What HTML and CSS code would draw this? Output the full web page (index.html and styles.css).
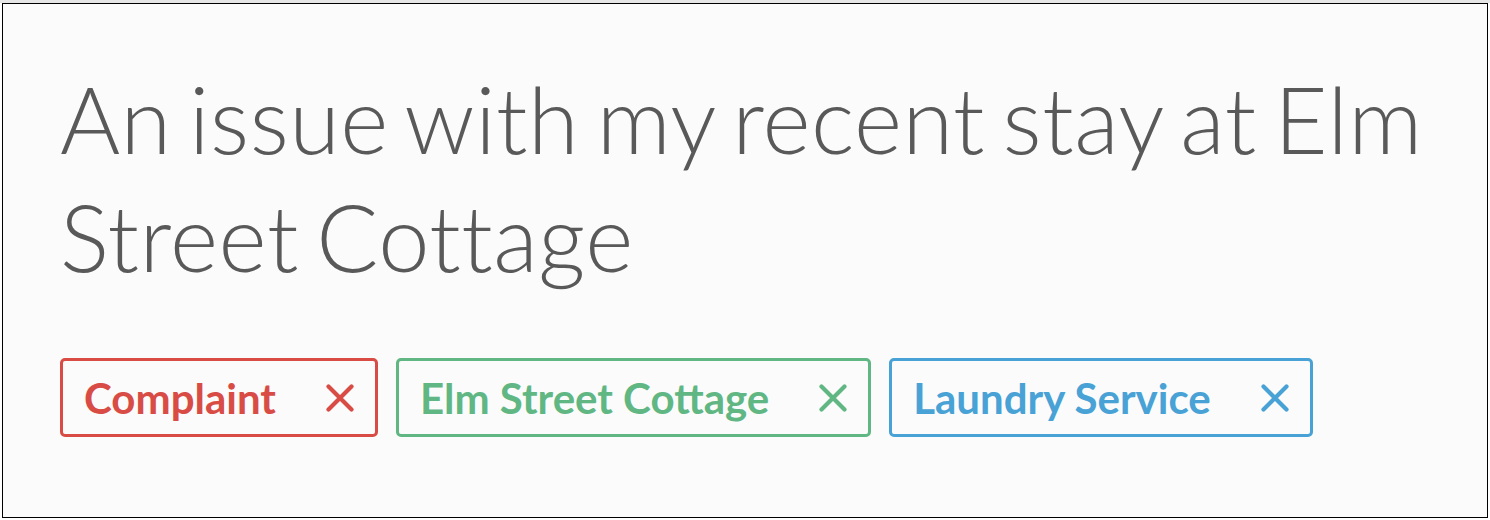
FILE: index.html
```html
<!DOCTYPE html>
<html>
    <head>
        <title>ticket</title>
        <meta name='viewport' content='width=device-width, initial-scale=1.0'>
        <link rel="stylesheet" href="styles.css">
    </head>
    <body>
        <div class='frame'>
            <h1>An issue with my recent stay at Elm Street Cottage</h1>
            <div class='tags'>
                <span class='tag red'>Complaint
                    <svg class='close' viewBox='0 0 28 28'><path d='M2.5 2.5L25.5 25.5M25.5 2.5L2.5 25.5'/></svg>
                </span>
                <span class='tag green'>Elm Street Cottage
                    <svg class='close' viewBox='0 0 28 28'><path d='M2.5 2.5L25.5 25.5M25.5 2.5L2.5 25.5'/></svg>
                </span>
                <span class='tag blue'>Laundry Service
                    <svg class='close' viewBox='0 0 28 28'><path d='M2.5 2.5L25.5 25.5M25.5 2.5L2.5 25.5'/></svg>
                </span>
            </div>
        </div>
    </body>
</html>
```
FILE: styles.css
```css
* {
    margin: 0px;
    padding: 0px;
    box-sizing: border-box;
}
html {
    background: #fff;
}
body {
    padding: 3px 2px 2px 2px;
    background: linear-gradient(#e6e6e6 3px, #fff 3px);
    font-family: Lato, sans-serif;
}
.frame {
    height: 515px;
    border: 1px solid #000;
    background: #fbfbfb;
    padding: 56px 30px 0 57px;
}
h1 {
    font-weight: 300;
    font-size: 92px;
    line-height: 118px;
    letter-spacing: 0.5px;
    word-spacing: -8px;
    color: #595959;
    margin-bottom: 62px;
}
.tags {
    display: flex;
    gap: 18px;
}
.tag {
    display: flex;
    align-items: center;
    height: 79px;
    padding: 0 21px 0 21px;
    border: 3px solid;
    border-radius: 5px;
    font-weight: 700;
    font-size: 42px;
    gap: 50px;
}
.close {
    width: 28px;
    height: 28px;
    fill: none;
    stroke: currentColor;
    stroke-width: 4.2;
    stroke-linecap: round;
}
.red {
    color: #d84c45;
}
.green {
    color: #60b783;
}
.blue {
    color: #49a2d5;
}
```
